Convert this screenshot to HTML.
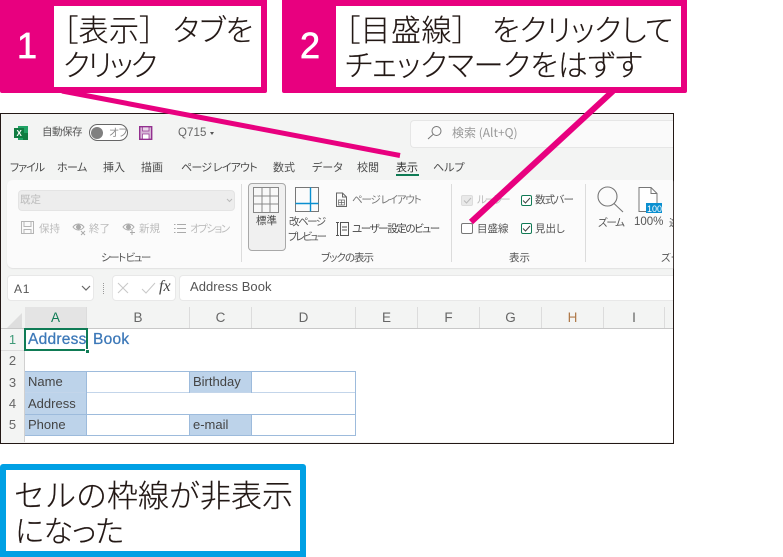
<!DOCTYPE html>
<html lang="ja"><head><meta charset="utf-8">
<style>
html,body{margin:0;padding:0;background:#fff}
#p{position:relative;width:783px;height:557px;overflow:hidden;background:#fff;font-family:"Liberation Sans","Noto Sans CJK JP",sans-serif}
#p div{position:absolute}
.t{white-space:nowrap;line-height:1;color:#444}
.c{font-family:"Noto Sans CJK JP",sans-serif;font-size:30px;color:#231815;white-space:nowrap;line-height:1;font-feature-settings:"palt";font-weight:300;-webkit-text-stroke:.2px #231815}
.m{font-family:"Noto Sans CJK JP",sans-serif;font-size:10.5px;font-feature-settings:"palt";color:#555}
.tab{font-size:11px;top:162px;color:#4d4d4d}
.g{color:#bcbcbc}
.n{font-size:36px;color:#fff;font-family:"Liberation Sans",sans-serif;-webkit-text-stroke:.7px #fff;text-align:center}
.cell{font-size:13px;color:#444}
.h{font-size:13.5px;color:#666;text-align:center;line-height:21px;top:307px;height:21px;border-right:1px solid #dcdcdc}
.r{font-size:13px;color:#666;left:2px;width:21px;text-align:center;line-height:21px}
.b{background:#bdd3ea}
.k{width:9px;height:9px;border:1px solid #117a55;border-radius:2px;background:#fff}
</style></head><body><div id="p">

<!-- Excel window -->
<div style="left:0;top:113px;background:#f3f4f3;border:1px solid #231815;box-sizing:border-box;width:674px;height:331px"></div>

<!-- title bar -->
<svg style="position:absolute;left:14px;top:126px" width="15" height="14"><rect x="4" y="0" width="10" height="14" fill="#21a366"/><rect x="9" y="7" width="5" height="7" fill="#107c41"/><rect x="0" y="2" width="10" height="10" fill="#107c41"/><text x="2.500" y="10" font-size="8" font-family="Liberation Sans" font-weight="bold" fill="#fff">X</text></svg>
<div class="t m" style="left:42px;top:127px;letter-spacing:-.5px">自動保存</div>
<div style="left:89px;top:124px;width:37px;height:15px;border:1px solid #666;border-radius:9px;background:#fff"></div>
<div style="left:91px;top:127px;width:12px;height:12px;border-radius:50%;background:#808080"></div>
<div class="t m" style="left:109px;top:128px;color:#888">オフ</div>
<svg style="position:absolute;left:139px;top:126px" width="14" height="14"><rect x=".7" y=".7" width="12" height="12.600" fill="#d7b7d7" stroke="#93308f" stroke-width="1.400"/><rect x="3.500" y="1" width="6.500" height="4" fill="#e9d9e9" stroke="#93308f" stroke-width=".7"/><rect x="3.500" y="8" width="6.500" height="5" fill="#fff" stroke="#93308f" stroke-width=".7"/></svg>
<div class="t" style="left:178px;top:128px;font-size:11.500px;color:#666;letter-spacing:.1px">Q715</div>
<div style="left:210px;top:132px;width:0;height:0;border:2.500px solid transparent;border-top:3px solid #555"></div>
<div style="left:410px;top:120px;width:262px;height:26px;background:#fafafa;border:1px solid #e6e6e6;border-right:0;border-radius:4px 0 0 4px"></div>
<svg style="position:absolute;left:427px;top:125px" width="15" height="15" fill="none" stroke="#777"><circle cx="9.500" cy="6" r="4.500"/><path d="M6 9.500 1 14"/></svg>
<div class="t m" style="left:452px;top:127px;color:#999;font-size:12px">検索 (Alt+Q)</div>

<!-- tabs -->
<div class="t m tab" style="left:10px;letter-spacing:-1px">ファイル</div>
<div class="t m tab" style="left:57px;letter-spacing:-.6px">ホーム</div>
<div class="t m tab" style="left:103px">挿入</div>
<div class="t m tab" style="left:141px">描画</div>
<div class="t m tab" style="left:181px;letter-spacing:-.8px">ページ レイアウト</div>
<div class="t m tab" style="left:273px">数式</div>
<div class="t m tab" style="left:312px">データ</div>
<div class="t m tab" style="left:357px">校閲</div>
<div class="t m tab" style="left:396px;color:#333">表示</div>
<div style="left:396px;top:174px;width:23px;height:2px;background:#0f7b55"></div>
<div class="t m tab" style="left:433px">ヘルプ</div>

<!-- ribbon -->
<div style="left:7px;top:180px;width:666px;height:88px;background:#fbfbfb;border-radius:6px 0 0 6px;box-shadow:0 1px 1px #e2e2e2"></div>
<div style="left:18px;top:190px;width:217px;height:21px;background:#ededed;border:1px solid #e4e4e4;border-radius:4px;box-sizing:border-box"></div>
<div class="t m g" style="left:20px;top:195px">既定</div>
<svg style="position:absolute;left:226px;top:198px" width="7" height="5" fill="none" stroke="#bbb"><path d="M1 1l2.500 2.500L6 1"/></svg>
<svg style="position:absolute;left:21px;top:221px" width="14" height="14" fill="none" stroke="#b5b5b5"><rect x=".5" y=".5" width="12" height="12"/><path d="M3 .5v5h7v-5M3 12.500v-4h7v4"/></svg>
<div class="t m g" style="left:39px;top:224px">保持</div>
<svg style="position:absolute;left:72px;top:222px" width="14" height="14" fill="none" stroke="#aaa"><path d="M1 5c3-4 8-4 11 0-3 4-8 4-11 0z"/><circle cx="6.500" cy="5" r="2" fill="#aaa"/><path d="M9 9l4 4M13 9l-4 4"/></svg>
<div class="t m g" style="left:89px;top:224px">終了</div>
<svg style="position:absolute;left:122px;top:222px" width="14" height="14" fill="none" stroke="#aaa"><path d="M1 5c3-4 8-4 11 0-3 4-8 4-11 0z"/><circle cx="6.500" cy="5" r="2" fill="#aaa"/><path d="M10 8v5M8 10.500h5"/></svg>
<div class="t m g" style="left:139px;top:224px">新規</div>
<svg style="position:absolute;left:173px;top:222px" width="13" height="13" fill="none" stroke="#aaa"><path d="M4 2.500h9M4 6.500h9M4 10.500h9M1 2.500h1.500M1 6.500h1.500M1 10.500h1.500"/></svg>
<div class="t m g" style="left:190px;top:224px;letter-spacing:-1.500px">オプション</div>
<div class="t m" style="left:101px;top:253px;letter-spacing:-1.500px">シート ビュー</div>
<div style="left:241px;top:184px;width:1px;height:78px;background:#dcdcdc"></div>

<div style="left:248px;top:183px;width:36px;height:66px;background:#f0f0f0;border:1px solid #a8a8a8;border-radius:4px"></div>
<svg style="position:absolute;left:253px;top:187px" width="27" height="27" fill="#f8f8f8" stroke="#888"><rect x=".5" y=".5" width="25" height="25"/><path d="M.5 9h25M.5 17h25M9 .5v25M17 .5v25"/></svg>
<div class="t m" style="left:256px;top:216px;color:#444">標準</div>
<svg style="position:absolute;left:295px;top:187px" width="26" height="26" fill="none"><rect x=".5" y=".5" width="23" height="24" stroke="#777"/><path d="M.5 16.500h23M15.500.5v24" stroke="#0a8fd0" stroke-width="1.400"/></svg>
<div class="t m" style="left:289px;top:217px;letter-spacing:-1.500px">改ページ</div>
<div class="t m" style="left:288px;top:232px;letter-spacing:-2.200px">プレビュー</div>
<svg style="position:absolute;left:335px;top:192px" width="13" height="16" fill="none" stroke="#666"><path d="M1.500 1h6l4 4v9.500h-10zM7.500 1v4h4"/><path d="M3.500 8h6v5h-6zM3.500 10.500h6M6.500 8v5" stroke-width=".7"/></svg>
<div class="t m" style="left:352px;top:195px;color:#777;letter-spacing:-1.200px">ページ レイアウト</div>
<svg style="position:absolute;left:335px;top:221px" width="14" height="16" fill="none" stroke="#555"><path d="M1 1.500h3M1 14.500h3M2.500 1.500v13"/><rect x="5.500" y="1.500" width="8" height="13"/><path d="M7 6h5M7 9h5"/></svg>
<div class="t m" style="left:352px;top:224px;letter-spacing:-1.400px;color:#444">ユーザー設定のビュー</div>
<div class="t m" style="left:321px;top:253px;letter-spacing:-1px">ブックの表示</div>
<div style="left:451px;top:184px;width:1px;height:78px;background:#dcdcdc"></div>

<div style="left:461px;top:195px;width:10px;height:9px;background:#e9e9e9;border:1px solid #dcdcdc;border-radius:2px"></div>
<svg style="position:absolute;left:463px;top:197px" width="9" height="7" fill="none" stroke="#bbb"><path d="M1 3.500l2.500 2.500L8 1"/></svg>
<div class="t m g" style="left:477px;top:195px;letter-spacing:-2px">ルーラー</div>
<div class="k" style="left:521px;top:195px"></div>
<svg style="position:absolute;left:522px;top:197px" width="9" height="7" fill="none" stroke="#444"><path d="M1 3.500l2.500 2.500L8 1"/></svg>
<div class="t m" style="left:535px;top:195px;letter-spacing:-.8px">数式バー</div>
<div style="left:461px;top:223px;width:10px;height:9px;border:1px solid #777;border-radius:2px;background:#fff"></div>
<div class="t m" style="left:477px;top:224px">目盛線</div>
<div class="k" style="left:521px;top:223px"></div>
<svg style="position:absolute;left:522px;top:225px" width="9" height="7" fill="none" stroke="#444"><path d="M1 3.500l2.500 2.500L8 1"/></svg>
<div class="t m" style="left:535px;top:224px">見出し</div>
<div class="t m" style="left:509px;top:253px">表示</div>
<div style="left:585px;top:184px;width:1px;height:78px;background:#dcdcdc"></div>

<svg style="position:absolute;left:597px;top:186px" width="28" height="28" fill="none" stroke="#777" stroke-width="1.100"><circle cx="10.500" cy="10.500" r="9.500"/><path d="M17 17.500 26 26"/></svg>
<div class="t m" style="left:598px;top:218px;letter-spacing:-1.300px">ズーム</div>
<svg style="position:absolute;left:638px;top:187px" width="25" height="27"><path d="M1 .5h12l6 6v18H1z" fill="#fff" stroke="#777"/><path d="M13 .5v6h6" fill="none" stroke="#777"/><rect x="8" y="16" width="16" height="10" fill="#0a8fd0"/><text x="9" y="25" font-size="9" font-family="Liberation Sans" fill="#fff">100</text></svg>
<div class="t" style="left:634px;top:217px;font-size:11.500px;color:#555">100%</div>
<div class="t m" style="left:669px;top:218px;width:4px;overflow:hidden">選</div>
<div class="t m" style="left:661px;top:253px;width:12px;overflow:hidden">ズーム</div>

<!-- formula bar -->
<div style="left:7px;top:275px;width:87px;height:26px;background:#fff;border:1px solid #e8e8e8;border-radius:4px;box-sizing:border-box"></div>
<div class="t" style="left:14px;top:283px;font-size:12px;color:#555;letter-spacing:.8px">A1</div>
<svg style="position:absolute;left:81px;top:285px" width="10" height="7" fill="none" stroke="#666" stroke-width="1.200"><path d="M1 1l4 4 4-4"/></svg>
<div style="left:103px;top:283px;width:1px;height:11px;border-left:1px dotted #999"></div>
<div style="left:112px;top:275px;width:64px;height:26px;background:#fff;border:1px solid #e8e8e8;border-radius:4px;box-sizing:border-box"></div>
<svg style="position:absolute;left:117px;top:281px" width="40" height="14" fill="none" stroke="#c8c8c8"><path d="M1 2l10 10M11 2 1 12M25 8l4 4 9-10"/></svg>
<div class="t" style="left:159px;top:279px;font-family:'Liberation Serif',serif;font-style:italic;font-size:16px;color:#444">fx</div>
<div style="left:179px;top:275px;width:494px;height:26px;background:#fff;border:1px solid #e8e8e8;border-right:0;border-radius:4px 0 0 4px;box-sizing:border-box"></div>
<div class="t" style="left:190px;top:280px;font-size:13px;color:#555;letter-spacing:.05px">Address Book</div>

<!-- headers -->
<div style="left:1px;top:307px;width:672px;height:22px;background:#f3f4f3;border-bottom:1px solid #c8c8c8;box-sizing:border-box"></div>
<svg style="position:absolute;left:7px;top:313px" width="16" height="15"><path d="M0 15 15 0v15z" fill="#dedede"/></svg>
<div class="h" style="left:25px;width:61px;background:#e4e4e4;color:#0f7b55">A</div>
<div class="h" style="left:87px;width:102px">B</div>
<div class="h" style="left:190px;width:61px">C</div>
<div class="h" style="left:252px;width:103px">D</div>
<div class="h" style="left:356px;width:61px">E</div>
<div class="h" style="left:418px;width:61px">F</div>
<div class="h" style="left:480px;width:61px">G</div>
<div class="h" style="left:542px;width:61px;color:#b07a4a">H</div>
<div class="h" style="left:604px;width:60px">I</div>

<!-- sheet -->
<div style="left:25px;top:329px;width:648px;height:113px;background:#fff"></div>
<div style="left:24px;top:329px;width:1px;height:113px;background:#d0d0d0"></div>
<div class="r" style="top:329px;color:#3f9a78">1</div>
<div style="left:1px;top:350px;width:24px;height:1px;background:#ddd"></div>
<div class="r" style="top:350px">2</div>
<div class="r" style="top:372px">3</div>
<div class="r" style="top:393px">4</div>
<div class="r" style="top:414px">5</div>

<div class="b" style="left:25px;top:372px;width:62px;height:64px"></div>
<div class="b" style="left:190px;top:372px;width:62px;height:21px"></div>
<div class="b" style="left:190px;top:415px;width:62px;height:21px"></div>
<div style="left:25px;top:371px;width:331px;height:1px;background:#9dbbdc"></div>
<div style="left:25px;top:392px;width:331px;height:1px;background:#c3d5ea"></div>
<div style="left:25px;top:414px;width:331px;height:1px;background:#9dbbdc"></div>
<div style="left:25px;top:435px;width:331px;height:1px;background:#9dbbdc"></div>
<div style="left:355px;top:371px;width:1px;height:65px;background:#9dbbdc"></div>
<div style="left:86px;top:371px;width:1px;height:65px;background:#9dbbdc"></div>
<div style="left:189px;top:371px;width:1px;height:22px;background:#9dbbdc"></div>
<div style="left:251px;top:371px;width:1px;height:22px;background:#9dbbdc"></div>
<div style="left:189px;top:414px;width:1px;height:22px;background:#9dbbdc"></div>
<div style="left:251px;top:414px;width:1px;height:22px;background:#9dbbdc"></div>

<div class="t" style="left:28px;top:332px;font-size:15.500px;color:#3c78b8;width:58px;overflow:hidden;letter-spacing:.25px;-webkit-text-stroke:.25px #3c78b8">Address</div>
<div class="t" style="left:93px;top:332px;font-size:15.500px;color:#3c78b8;letter-spacing:.25px;-webkit-text-stroke:.25px #3c78b8">Book</div>
<div style="left:24px;top:328px;width:64px;height:23px;border:2px solid #0f7b55;box-sizing:border-box"></div>
<div style="left:85px;top:349px;width:5px;height:5px;background:#0f7b55;border:1px solid #fff;box-sizing:border-box"></div>
<div class="t cell" style="left:28px;top:375px">Name</div>
<div class="t cell" style="left:28px;top:397px">Address</div>
<div class="t cell" style="left:28px;top:418px">Phone</div>
<div class="t cell" style="left:193px;top:375px">Birthday</div>
<div class="t cell" style="left:193px;top:418px">e-mail</div>

<!-- callout lines -->
<svg style="position:absolute;left:0;top:0" width="783" height="557"><path d="M62 91 400 155.500" stroke="#e8007f" stroke-width="5" fill="none"/><path d="M613 91 471 222" stroke="#e8007f" stroke-width="6" fill="none"/></svg>

<!-- callouts -->
<div style="left:0;top:0;width:267px;height:93px;background:#e8007f;border-radius:0 0 2px 2px"></div>
<div style="left:54px;top:6px;width:207px;height:81px;background:#fff"></div>
<div class="t n" style="left:16px;top:28px;width:22px">1</div>
<div class="c" style="left:63px;top:13px;letter-spacing:.5px">［表示］</div>
<div class="c" style="left:173px;top:13px">タブを</div>
<div class="c" style="left:63px;top:48px;letter-spacing:-2.500px">クリック</div>

<div style="left:282px;top:0;width:405px;height:93px;background:#e8007f;border-radius:0 0 2px 2px"></div>
<div style="left:336px;top:6px;width:345px;height:81px;background:#fff"></div>
<div class="t n" style="left:298px;top:28px;width:24px">2</div>
<div class="c" style="left:345px;top:13px;letter-spacing:.5px">［目盛線］</div>
<div class="c" style="left:492px;top:13px;letter-spacing:-.1px">をクリックして</div>
<div class="c" style="left:345px;top:48px;letter-spacing:-.1px">チェックマークをはずす</div>

<div style="left:0;top:464px;width:306px;height:93px;background:#00a0e4;border-radius:3px 3px 0 0"></div>
<div style="left:6px;top:470px;width:294px;height:81px;background:#fff"></div>
<div class="c" style="left:14px;top:478px;font-feature-settings:normal;font-size:31px">セルの枠線が非表示</div>
<div class="c" style="left:15px;top:514px;letter-spacing:-.6px">になった</div>

</div></body></html>
